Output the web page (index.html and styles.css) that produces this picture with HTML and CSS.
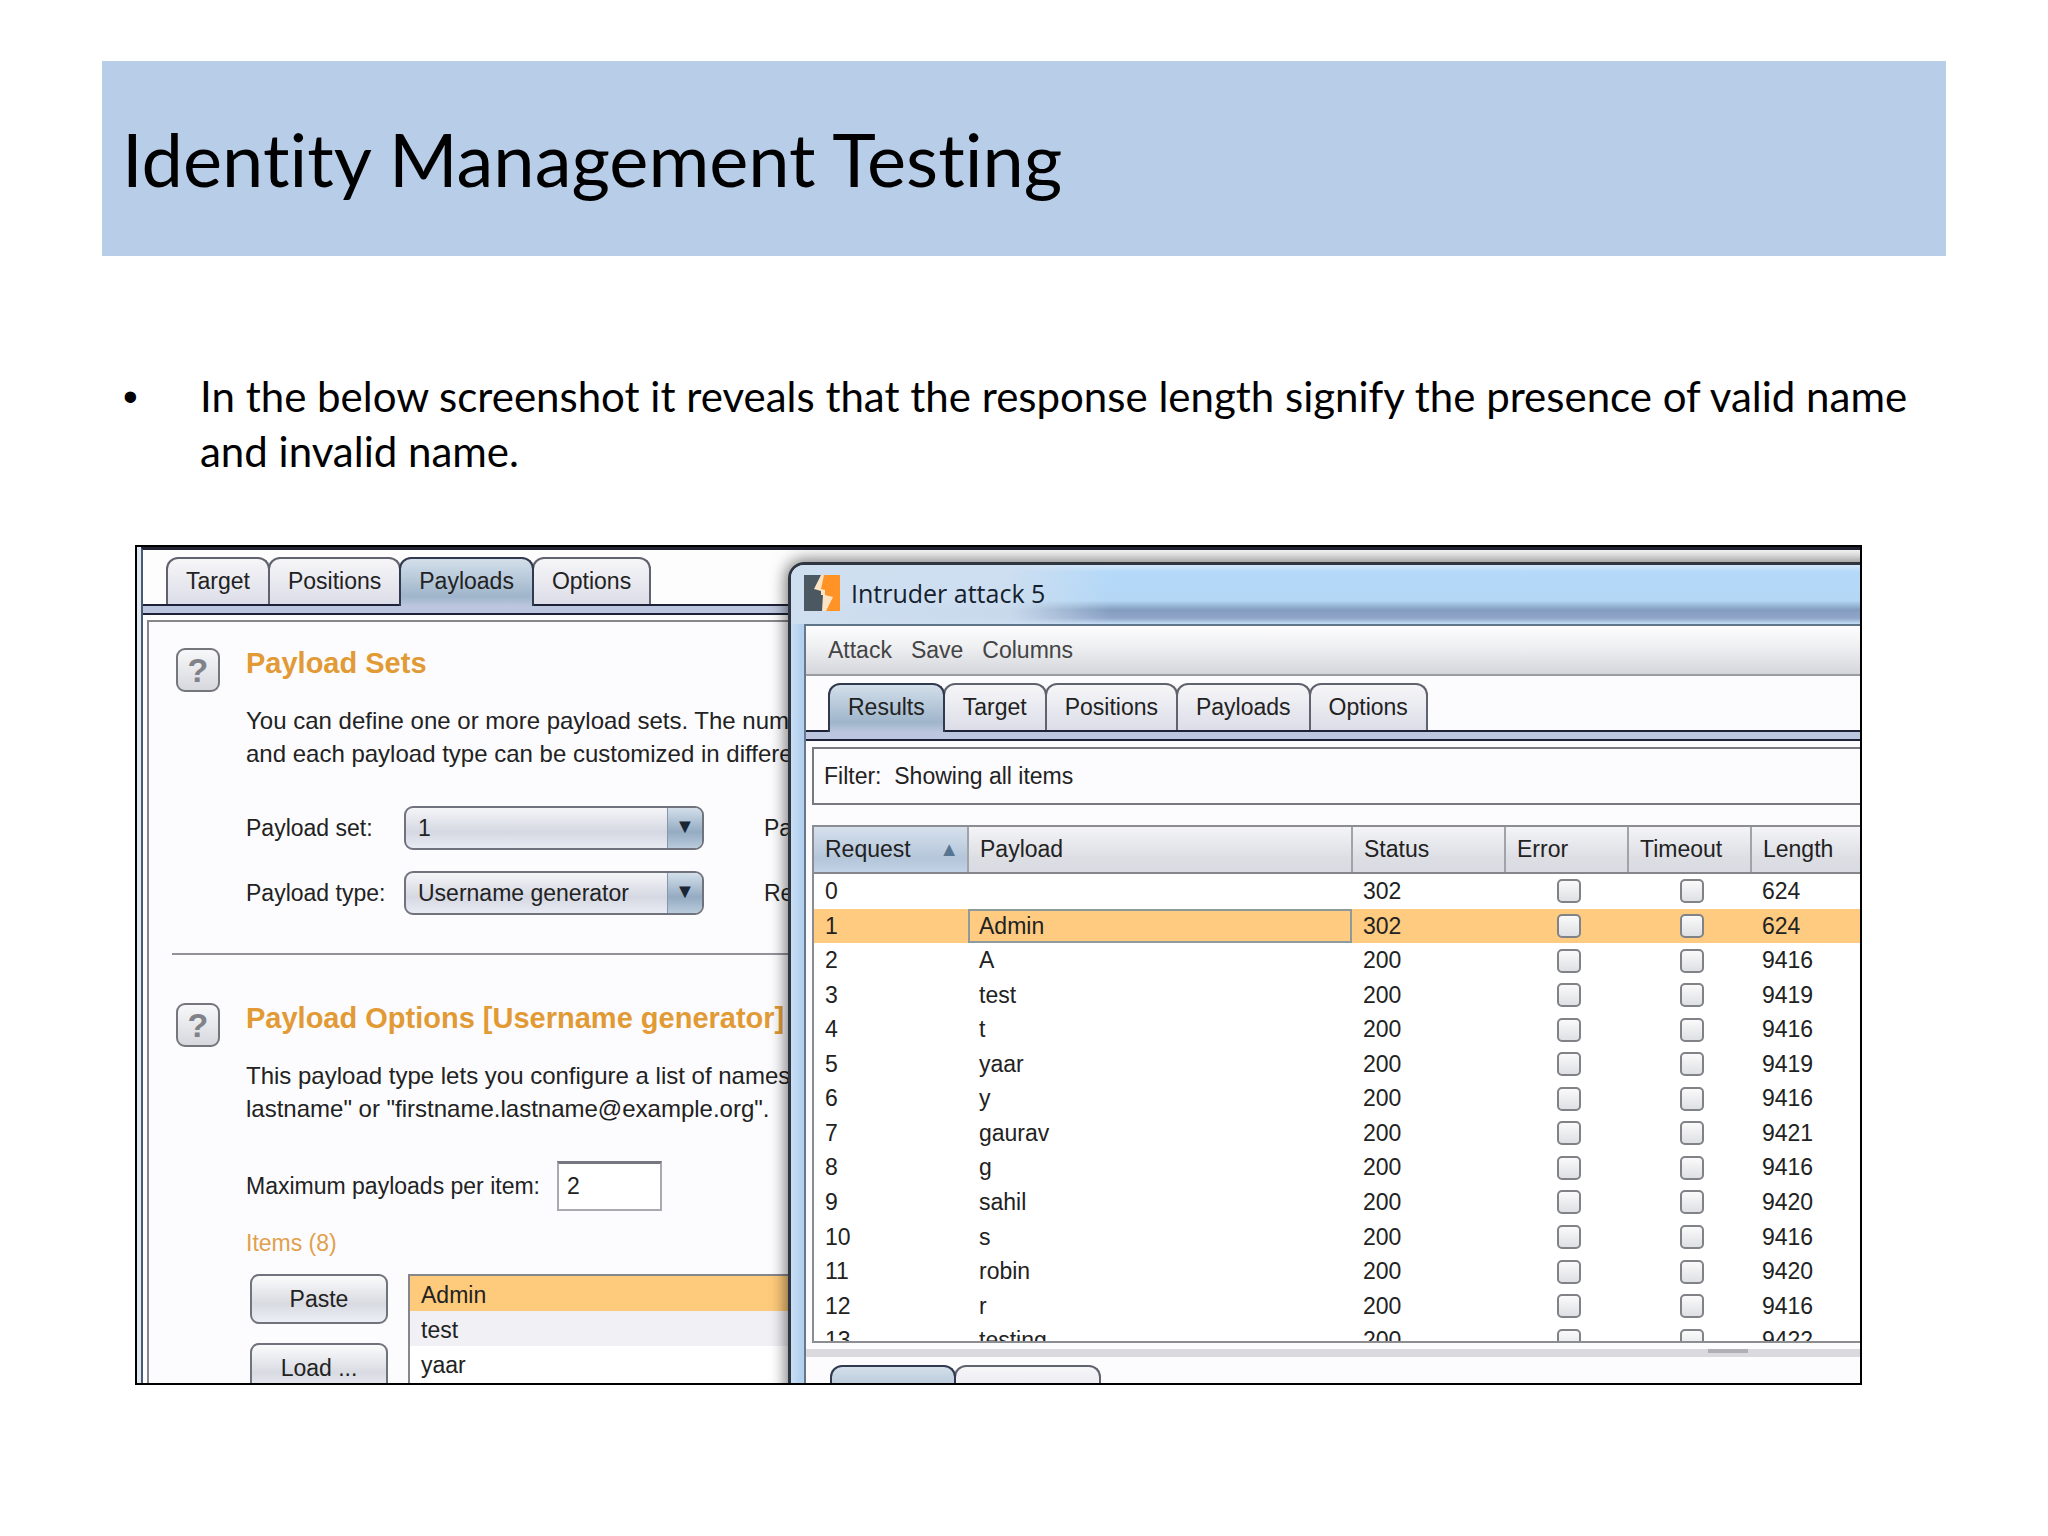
FILE: index.html
```
<!DOCTYPE html>
<html lang="en">
<head>
  <meta charset="UTF-8">
  <title>Identity Management Testing</title>
  <meta name="viewport" content="width=device-width, initial-scale=1.0">
  <link rel="stylesheet" href="styles.css">
</head>
<body>
  <h1 class="slide-title">Identity Management Testing</h1>

  <ul class="points">
    <li>In the below screenshot it reveals that the response length signify the presence of valid name and invalid name.</li>
  </ul>

  <div class="shot">
    <div class="main-window">
      <div class="tabs">
        <button class="tab">Target</button>
        <button class="tab">Positions</button>
        <button class="tab active">Payloads</button>
        <button class="tab">Options</button>
      </div>

      <div class="panel">
        <section class="block">
          <button class="help">?</button>
          <div class="block-body">
            <h2>Payload Sets</h2>
            <p>You can define one or more payload sets. The num<br>and each payload type can be customized in differe</p>
            <div class="fields">
              <label for="payloadSet">Payload set:</label>
              <span class="select"><select id="payloadSet"><option>1</option></select></span>
              <span class="count">Pa</span>
              <label for="payloadType">Payload type:</label>
              <span class="select"><select id="payloadType"><option>Username generator</option></select></span>
              <span class="count">Re</span>
            </div>
          </div>
        </section>

        <hr>

        <section class="block">
          <button class="help">?</button>
          <div class="block-body">
            <h2>Payload Options [Username generator]</h2>
            <p>This payload type lets you configure a list of names<br>lastname" or "firstname.lastname@example.org".</p>
            <div class="max-row">
              <label for="maxPayloads">Maximum payloads per item:</label>
              <input id="maxPayloads" type="text" value="2">
            </div>
            <h3>Items (8)</h3>
            <div class="items">
              <div class="item-buttons">
                <button>Paste</button>
                <button>Load ...</button>
              </div>
              <ul class="item-list">
                <li class="selected">Admin</li>
                <li>test</li>
                <li>yaar</li>
              </ul>
            </div>
          </div>
        </section>
      </div>
    </div>

    <div class="attack-window">
      <div class="titlebar">
        <svg class="logo" viewBox="0 0 36 36">
          <rect width="36" height="36" fill="#fbe3c4"/>
          <path d="M0 0H17L10 14L17 16V20H19L18 36H0Z" fill="#4b5862"/>
          <path d="M20 0H36V36H22L29 22L21 20V15L17 14Z" fill="#ff9326"/>
        </svg>
        <span>Intruder attack 5</span>
      </div>

      <div class="client">
        <div class="menubar">
          <button>Attack</button>
          <button>Save</button>
          <button>Columns</button>
        </div>

        <div class="tabs">
          <button class="tab active">Results</button>
          <button class="tab">Target</button>
          <button class="tab">Positions</button>
          <button class="tab">Payloads</button>
          <button class="tab">Options</button>
        </div>

        <button class="filter">Filter:&nbsp; Showing all items</button>

        <div class="results">
          <table>
            <colgroup>
              <col class="c-request"><col class="c-payload"><col class="c-status"><col class="c-flag"><col class="c-flag"><col>
            </colgroup>
            <thead>
              <tr>
                <th class="sorted">Request</th>
                <th>Payload</th>
                <th>Status</th>
                <th>Error</th>
                <th>Timeout</th>
                <th>Length</th>
              </tr>
            </thead>
            <tbody id="resultRows"></tbody>
          </table>
        </div>

        <div class="splitter"></div>

        <div class="tabs lower">
          <button class="tab active" aria-label="Request"></button>
          <button class="tab" aria-label="Response"></button>
        </div>
      </div>
    </div>
  </div>

  <script src="script.js"></script>
</body>
</html>
```
FILE: styles.css
```
*, *::before, *::after {
  box-sizing: border-box;
}

body {
  margin: 0;
  padding: 61px 102px;
  background: #fff;
  color: #000;
  font-family: Lato, sans-serif;
  font-variant-ligatures: none;
}

button, input, select {
  font: inherit;
  color: inherit;
}

/* slide */
.slide-title {
  display: flex;
  align-items: center;
  height: 195px;
  margin: 0;
  padding: 0 20px;
  background: #b8cde8;
  font-size: 74px;
  font-weight: 400;
}

.points {
  margin: 113px 0 66px;
  padding: 0 0 0 98px;
  list-style: none;
  font-size: 42px;
  line-height: 55px;
}

.points li::before {
  content: "•";
  float: left;
  margin-left: -77px;
  font-family: "Liberation Sans", Arial, sans-serif;
}

.shot {
  position: relative;
  height: 840px;
  margin: 0 84px 0 33px;
  border: 2px solid #000;
  overflow: hidden;
  background: #dfe9f3;
  color: #222;
  font-family: "Liberation Sans", Arial, sans-serif;
  font-size: 23px;
}

/* main window */
.main-window {
  height: 100%;
  margin-left: 4px;
  border-top: 3px solid #223;
  border-left: 2px solid #4a5a70;
  background: #fdfdfe;
}

.main-window > .tabs {
  padding-left: 23px;
}

.tabs {
  display: flex;
  position: relative;
  padding: 7px 0 0 22px;
  margin-bottom: 9px;
}

/* coloured strip under the tabs */
.tabs::after {
  content: "";
  position: absolute;
  left: 0;
  right: 0;
  bottom: -9px;
  height: 11px;
  border: 2px solid #1d2238;
  border-width: 2px 0;
  background: #bcc6de;
}

.tab {
  height: 49px;
  margin-right: -2px;
  padding: 0 18px;
  border: 2px solid #60626e;
  border-bottom-color: #1d2238;
  border-radius: 12px 12px 0 0;
  background: linear-gradient(#f6f6f8, #dcdde8);
  white-space: nowrap;
}

.tab.active {
  position: relative;
  z-index: 1;
  padding-bottom: 2px;
  border-color: #30394e;
  border-bottom: 0;
  background: linear-gradient(#d3dfea, #9fb5cb 80%, #bcc6de);
}

.panel {
  height: 100%;
  margin: 14px 0 0 4px;
  padding: 26px 0 0 23px;
  border-top: 2px solid #85878c;
  border-left: 2px solid #85878c;
  background: #fcfcfe;
}

.block {
  display: flex;
  padding-left: 4px;
  white-space: nowrap;
}

.help {
  flex: none;
  width: 44px;
  height: 44px;
  margin-right: 26px;
  padding: 0;
  border: 2px solid #74767c;
  border-radius: 9px;
  background: linear-gradient(#f8f8fa, #d6d8de);
  color: #808288;
  font-size: 34px;
  font-weight: 700;
  line-height: 38px;
}

h2 {
  margin: 0 0 26px;
  color: #e29a35;
  font-size: 29px;
  line-height: 30px;
}

.block p {
  margin: 0;
  font-size: 24px;
  line-height: 33px;
}

.fields {
  display: grid;
  grid-template-columns: 158px 300px auto;
  row-gap: 21px;
  align-items: center;
  margin-top: 36px;
}

.select {
  position: relative;
  display: flex;
}

.select select {
  width: 100%;
  height: 44px;
  padding: 0 12px;
  appearance: none;
  border: 2px solid #70737c;
  border-radius: 9px;
  background: linear-gradient(#f5f5f8, #d5d8e2 60%, #e9ebf3);
}

.select::after {
  content: "▼";
  position: absolute;
  top: 2px;
  right: 2px;
  bottom: 2px;
  width: 35px;
  border-left: 1px solid #8795a6;
  border-radius: 0 7px 7px 0;
  background: linear-gradient(#d3dfea, #94abc2 60%, #b9cbdc);
  color: #1b2635;
  font-size: 20px;
  line-height: 36px;
  text-align: center;
  pointer-events: none;
}

.count {
  padding-left: 60px;
}

hr {
  height: 2px;
  margin: 38px 0 48px;
  border: 0;
  background: #929398;
}

.max-row {
  display: flex;
  align-items: center;
  gap: 17px;
  margin-top: 36px;
}

.max-row input {
  width: 105px;
  height: 50px;
  padding: 0 8px;
  border: 2px solid #a9a9b0;
  border-top: 3px solid #77777f;
  background: #fff;
}

h3 {
  margin: 17px 0 16px;
  color: #e0a04c;
  font-size: 23px;
  font-weight: 400;
  line-height: 30px;
}

.items {
  display: flex;
  gap: 20px;
}

.item-buttons {
  display: flex;
  flex-direction: column;
  gap: 19px;
  margin-left: 4px;
}

.item-buttons button {
  width: 138px;
  height: 50px;
  border: 2px solid #70737c;
  border-radius: 9px;
  background: linear-gradient(#fbfbfc, #d9dbe2 60%, #eceef6);
}

.item-list {
  flex: 1;
  height: 150px;
  margin: 0;
  padding: 0;
  border: 2px solid #85878c;
  background: #fff;
  list-style: none;
}

.item-list li {
  height: 35px;
  padding-left: 11px;
  line-height: 39px;
}

.item-list li:nth-child(2) {
  background: #f1f1f5;
}

.item-list .selected {
  background: #fecb7c;
}

/* attack window, floats over the main one */
.attack-window {
  position: absolute;
  top: 15px;
  left: 651px;
  right: -20px;
  bottom: -20px;
  padding-left: 13px;
  border: 3px solid #30363f;
  border-radius: 16px 0 0 0;
  background: linear-gradient(90deg, #c9dff5, #b3d0ee 10px, #b3d0ee);
  box-shadow: 0 0 16px 2px rgba(0, 0, 0, 0.55);
}

.titlebar {
  display: flex;
  align-items: center;
  gap: 11px;
  height: 59px;
  margin-left: -13px;
  padding: 0 0 3px 13px;
  border-radius: 13px 0 0 0;
  background:
    linear-gradient(90deg, #cfdff0 0, rgba(207, 223, 240, 0.9) 220px, transparent 320px),
    linear-gradient(#d5e7fa, #b4d9f9 12%, #b4d7f5 60%, #839dbf 76%, #8fa5c9 90%, #c3def5);
  color: #15202e;
  font-family: "Open Sans", sans-serif;
  font-size: 25px;
}

.logo {
  width: 36px;
  height: 36px;
}

.client {
  height: 100%;
  border-top: 2px solid #5f7488;
  border-left: 2px solid #66788a;
  background: #fcfcfe;
}

.menubar {
  display: flex;
  gap: 19px;
  height: 50px;
  padding-left: 22px;
  border-bottom: 2px solid #9a9ca2;
  background: linear-gradient(#fdfdfe, #eeeff1 45%, #d5d6dc);
  color: #444;
}

.menubar button {
  padding: 0;
  border: 0;
  background: none;
}

.filter {
  display: block;
  width: 100%;
  height: 58px;
  margin: 15px 0 20px 6px;
  padding: 0 10px;
  border: 2px solid #77797f;
  background: #fcfbfd;
  text-align: left;
}

.results {
  height: 518px;
  margin-left: 6px;
  border: 2px solid #8b8d92;
  overflow: hidden;
  background: #fff;
}

table {
  width: 100%;
  height: 531px;
  border-collapse: collapse;
  table-layout: fixed;
}

.c-request { width: 154px; }
.c-payload { width: 384px; }
.c-status { width: 153px; }
.c-flag { width: 123px; }

th, td {
  padding: 0 0 0 11px;
  text-align: left;
  font-weight: 400;
}

th {
  height: 46px;
  border-right: 2px solid #a0a3aa;
  border-bottom: 2px solid #85878c;
  background: linear-gradient(#f4f4f7, #dcdee4 70%, #d9dbe2);
}

th.sorted {
  background: linear-gradient(#d6e0ec, #b4c6da 70%, #c3d2e6);
}

th.sorted::after {
  content: "▲";
  float: right;
  margin-right: 8px;
  color: #577493;
  font-size: 20px;
  line-height: 26px;
}

tr.selected {
  background: #fecb80;
}

tr.selected td:nth-child(2) {
  outline: 2px solid #8f9a9c;
  outline-offset: -2px;
}

.flag {
  text-align: center;
  padding-left: 4px;
}

.flag input {
  display: block;
  width: 24px;
  height: 24px;
  margin: 0 auto;
  appearance: none;
  border: 2px solid #808288;
  border-radius: 5px;
  background: linear-gradient(#fafafa, #dfe0e4);
}

.splitter {
  height: 8px;
  margin-top: 6px;
  background: linear-gradient(90deg, transparent 902px, #b0b0b6 902px, #b0b0b6 942px, transparent 942px) 0 0 / 100% 4px no-repeat #dadade;
}

.tabs.lower {
  padding-top: 8px;
  padding-left: 24px;
}

.lower .tab {
  width: 147px;
}

.lower .tab.active {
  width: 126px;
}
```
FILE: script.js
```
const results = [
  ['', 302, 624],
  ['Admin', 302, 624],
  ['A', 200, 9416],
  ['test', 200, 9419],
  ['t', 200, 9416],
  ['yaar', 200, 9419],
  ['y', 200, 9416],
  ['gaurav', 200, 9421],
  ['g', 200, 9416],
  ['sahil', 200, 9420],
  ['s', 200, 9416],
  ['robin', 200, 9420],
  ['r', 200, 9416],
  ['testing', 200, 9422]
];

document.getElementById('resultRows').innerHTML = results.map(([payload, status, length], i) => `
  <tr class="${i === 1 ? 'selected' : ''}">
    <td>${i}</td>
    <td>${payload}</td>
    <td>${status}</td>
    <td class="flag"><input type="checkbox" aria-label="Error ${i}"></td>
    <td class="flag"><input type="checkbox" aria-label="Timeout ${i}"></td>
    <td>${length}</td>
  </tr>`).join('');
```
